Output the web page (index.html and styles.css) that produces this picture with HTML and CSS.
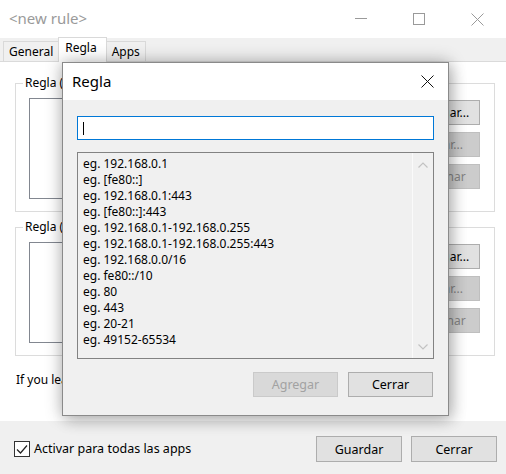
FILE: index.html
```html
<!DOCTYPE html>
<html>
<head>
<meta charset="utf-8">
<title>new rule</title>
<link rel="stylesheet" href="styles.css">
</head>
<body>
<div class="window">
  <div class="titlebar">
    <div class="title">&lt;new rule&gt;</div>
    <div class="ctl"><svg width="12" height="12" viewBox="0 0 12 12"><path d="M0 5.5H12" stroke="#9a9a9a" stroke-width="1"/></svg></div>
    <div class="ctl"><svg width="12" height="12" viewBox="0 0 12 12"><rect x="0.5" y="0.5" width="11" height="11" fill="none" stroke="#9a9a9a" stroke-width="1"/></svg></div>
    <div class="ctl"><svg width="13" height="13" viewBox="0 0 13 13"><path d="M0.5 0.5L12.5 12.5M12.5 0.5L0.5 12.5" stroke="#9a9a9a" stroke-width="1"/></svg></div>
  </div>
  <div class="tabs">
    <div class="tab">General</div>
    <div class="tab active">Regla</div>
    <div class="tab">Apps</div>
  </div>
  <div class="page">
    <fieldset class="group">
      <legend>Regla (remota)</legend>
      <div class="ginner">
        <div class="listbox"></div>
        <div class="btncol">
          <button class="btn">Agregar...</button>
          <button class="btn off">Editar...</button>
          <button class="btn off">Eliminar</button>
        </div>
      </div>
    </fieldset>
    <fieldset class="group second">
      <legend>Regla (local)</legend>
      <div class="ginner">
        <div class="listbox"></div>
        <div class="btncol">
          <button class="btn">Agregar...</button>
          <button class="btn off">Editar...</button>
          <button class="btn off">Eliminar</button>
        </div>
      </div>
    </fieldset>
    <p class="hint">If you leave it empty, the rule applies to all.</p>
  </div>
  <div class="footer">
    <label class="check">
      <span class="box"><svg width="14" height="14" viewBox="0 0 14 14"><path d="M2 7.5L5.5 11L12 3.5" fill="none" stroke="#222" stroke-width="1.2"/></svg></span>
      <span>Activar para todas las apps</span>
    </label>
    <div class="fbtns">
      <button class="btn wide">Guardar</button>
      <button class="btn wide">Cerrar</button>
    </div>
  </div>
</div>

<div class="dialog">
  <div class="dtitle">
    <span class="dname">Regla</span>
    <svg class="dclose" width="13" height="13" viewBox="0 0 13 13"><path d="M0.5 0.5L12.5 12.5M12.5 0.5L0.5 12.5" stroke="#111" stroke-width="1"/></svg>
  </div>
  <div class="dbody">
    <div class="input"><span class="caret"></span></div>
    <div class="examples">
      <div class="items">
        <div>eg. 192.168.0.1</div>
        <div>eg. [fe80::]</div>
        <div>eg. 192.168.0.1:443</div>
        <div>eg. [fe80::]:443</div>
        <div>eg. 192.168.0.1-192.168.0.255</div>
        <div>eg. 192.168.0.1-192.168.0.255:443</div>
        <div>eg. 192.168.0.0/16</div>
        <div>eg. fe80::/10</div>
        <div>eg. 80</div>
        <div>eg. 443</div>
        <div>eg. 20-21</div>
        <div>eg. 49152-65534</div>
      </div>
      <div class="vscroll">
        <svg width="10" height="6" viewBox="0 0 10 6"><path d="M0.5 5.5L5 1L9.5 5.5" fill="none" stroke="#c2c2c2" stroke-width="1.2"/></svg>
        <svg width="10" height="6" viewBox="0 0 10 6"><path d="M0.5 0.5L5 5L9.5 0.5" fill="none" stroke="#c2c2c2" stroke-width="1.2"/></svg>
      </div>
    </div>
    <div class="dbtns">
      <button class="btn dbtn disabled">Agregar</button>
      <button class="btn dbtn">Cerrar</button>
    </div>
  </div>
</div>
</body>
</html>
```

FILE: styles.css
```css
* { box-sizing: border-box; }
html, body { margin: 0; padding: 0; }
body {
  width: 506px;
  height: 474px;
  overflow: hidden;
  position: relative;
  font-family: "Noto Sans", "Open Sans", sans-serif;
  font-size: 12px;
  color: #000;
  background: #fff;
}
.window {
  width: 506px;
  height: 474px;
  display: flex;
  flex-direction: column;
  overflow: hidden;
}
.titlebar {
  height: 38px;
  flex: none;
  display: flex;
  align-items: center;
  background: #fff;
}
.title {
  flex: 1;
  padding-left: 9px;
  font-size: 15px;
  color: #9a9a9a;
  padding-bottom: 2px;
}
.ctl {
  flex: none;
  width: 58px;
  height: 38px;
  display: flex;
  align-items: center;
  justify-content: center;
}
.tabs {
  height: 24px;
  flex: none;
  background: #f0f0f0;
  display: flex;
  align-items: flex-end;
  padding-left: 3px;
  border-bottom: 1px solid #dadada;
}
.tab {
  height: 21px;
  padding: 0 5px;
  border: 1px solid #d9d9d9;
  border-bottom: none;
  display: flex;
  align-items: center;
  line-height: 16px;
  margin-bottom: -1px;
}
.tab + .tab { margin-left: -1px; }
.tab.active {
  height: 25px;
  background: #fff;
  align-items: flex-start;
  padding-top: 2px;
  padding-left: 6px;
  padding-right: 9px;
  position: relative;
}
.page {
  flex: 1;
  background: #fff;
  padding: 13px 11px 0 15px;
}
.group {
  margin: 0;
  padding: 7px 14px 12px 13px;
  border: 1px solid #dcdcdc;
  min-width: 0;
}
.group.second { margin-top: 7px; }
.group legend {
  padding: 0 2px;
  margin-left: -6px;
  line-height: 16px;
}
.ginner {
  display: flex;
  gap: 10px;
}
.listbox {
  flex: 1;
  height: 101px;
  border: 1px solid #828790;
  background: #fff;
}
.btncol {
  width: 75px;
  display: flex;
  flex-direction: column;
  gap: 7px;
  padding-top: 2px;
}
.btn {
  font-family: inherit;
  font-size: 12px;
  height: 25px;
  padding: 0;
  background: #e1e1e1;
  border: 1px solid #adadad;
  color: #000;
}
.btn.off {
  background: #cccccc;
  border-color: #bfbfbf;
  color: #838383;
}
.hint {
  margin: 16px 0 0 1px;
  line-height: 16px;
}
.footer {
  height: 53px;
  flex: none;
  background: #f0f0f0;
  display: flex;
  align-items: flex-start;
  justify-content: space-between;
  padding: 15px 9px 0 14px;
}
.check {
  display: flex;
  align-items: center;
  gap: 4px;
  margin-top: 5px;
  line-height: 16px;
  font-size: 12.5px;
}
.box {
  width: 16px;
  height: 16px;
  border: 1px solid #333;
  background: #fff;
  display: flex;
  align-items: center;
  justify-content: center;
}
.fbtns {
  display: flex;
  gap: 9px;
}
.btn.wide {
  width: 86px;
  height: 26px;
  font-size: 12.5px;
}

/* modal dialog overlay */
.dialog {
  position: absolute;
  left: 62px;
  top: 62px;
  width: 387px;
  height: 354px;
  border: 1px solid #8a8a8a;
  background: #f0f0f0;
  box-shadow: 0 0 16px rgba(0, 0, 0, 0.3), 4px 6px 14px rgba(0, 0, 0, 0.14);
  display: flex;
  flex-direction: column;
}
.dtitle {
  height: 37px;
  flex: none;
  background: #fff;
  display: flex;
  align-items: center;
  justify-content: space-between;
  padding: 0 15px 0 9px;
}
.dname {
  font-size: 15px;
  padding-bottom: 2px;
}
.dclose { margin-right: -1px; margin-top: -1px; }
.dbody {
  flex: 1;
  padding: 16px 14px 0 14px;
  display: flex;
  flex-direction: column;
}
.input {
  height: 24px;
  border: 1px solid #0078d7;
  background: #fff;
  position: relative;
}
.caret {
  position: absolute;
  left: 5px;
  top: 5px;
  width: 1px;
  height: 13px;
  background: #000;
}
.examples {
  margin-top: 12px;
  height: 207px;
  border: 1px solid #828282;
  background: #f0f0f0;
  display: flex;
}
.items {
  flex: 1;
  padding: 3px 0 0 5px;
  line-height: 16px;
  font-size: 12px;
}
.vscroll {
  width: 21px;
  border-left: 1px solid #fafafa;
  display: flex;
  flex-direction: column;
  justify-content: space-between;
  align-items: center;
  padding: 9px 0 8px 0;
}
.dbtns {
  margin-top: 13px;
  display: flex;
  justify-content: flex-end;
  gap: 10px;
  padding-right: 1px;
}
.btn.dbtn {
  width: 85px;
  height: 25px;
  font-size: 12.5px;
}
.btn.dbtn.disabled {
  background: #d9d9d9;
  border-color: #cacaca;
  color: #a2a2a2;
}
```
